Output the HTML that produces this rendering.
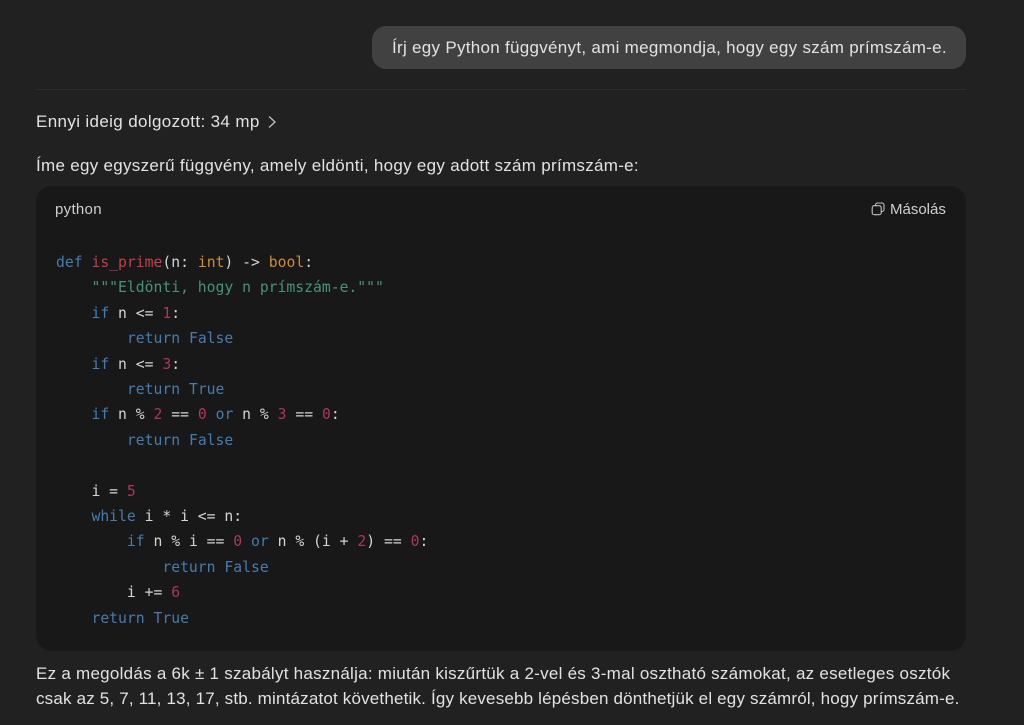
<!DOCTYPE html>
<html lang="hu">
<head>
<meta charset="utf-8">
<title>Python</title>
<style>
html,body{margin:0;padding:0;width:1024px;height:725px;overflow:hidden;background:#212121}
body{position:relative;font-family:"Liberation Sans",sans-serif;color:#e0e0e0}
.a{position:absolute;white-space:nowrap}
.t{font-size:17px;line-height:24px;color:#e2e2e2}
#bubble{left:372px;top:26px;width:594px;height:43px;background:#414141;border-radius:14px}
#hr{left:36px;top:89px;width:930px;height:1px;background:#2d2d2d}
#code{left:36px;top:186px;width:930px;height:465px;background:#181818;border-radius:16px}
.c{position:absolute;left:56px;margin:0;font-family:"DejaVu Sans Mono","Liberation Mono",monospace;font-size:14.72px;line-height:25.4px;color:#d4d4d4;white-space:pre}
.k{color:#457cad}.f{color:#c0414a}.y{color:#c98c3a}.s{color:#46927a}.n{color:#b0345b}
</style>
</head>
<body>
<div class="a" id="bubble"></div>
<div class="a t" style="left:392px;top:36px;letter-spacing:.29px">Írj egy Python függvényt, ami megmondja, hogy egy szám prímszám-e.</div>
<div class="a" id="hr"></div>
<div class="a t" style="left:36px;top:110px;letter-spacing:.36px">Ennyi ideig dolgozott: 34 mp</div>
<svg class="a" style="left:266px;top:114px" width="12" height="16" viewBox="0 0 12 16"><path d="M3 2.5l6 5.5-6 5.5" fill="none" stroke="#b8b8b8" stroke-width="1.4"/></svg>
<div class="a t" style="left:36px;top:154px;letter-spacing:.29px">Íme egy egyszerű függvény, amely eldönti, hogy egy adott szám prímszám-e:</div>
<div class="a" id="code"></div>
<div class="a" style="left:55px;top:201px;font-size:15px;line-height:18px;letter-spacing:.3px;color:#cfcfcf">python</div>
<svg class="a" style="left:871px;top:202px" width="14" height="14" viewBox="0 0 14 14"><path d="M4.5 3.5V3a2 2 0 0 1 2-2H11a2 2 0 0 1 2 2v4.5a2 2 0 0 1-2 2h-.5" fill="none" stroke="#c0c0c0" stroke-width="1.1"/><rect x="1.2" y="3.7" width="9" height="9" rx="2" fill="none" stroke="#c0c0c0" stroke-width="1.1"/></svg>
<div class="a" style="left:890px;top:201px;font-size:15px;line-height:18px;color:#cfcfcf">Másolás</div>
<pre class="c" style="top:250px"><span class="k">def</span> <span class="f">is_prime</span>(n: <span class="y">int</span>) -&gt; <span class="y">bool</span>:
    <span class="s">"""Eldönti, hogy n prímszám-e."""</span>
    <span class="k">if</span> n &lt;= <span class="n">1</span>:
        <span class="k">return</span> <span class="k">False</span>
    <span class="k">if</span> n &lt;= <span class="n">3</span>:
        <span class="k">return</span> <span class="k">True</span>
    <span class="k">if</span> n % <span class="n">2</span> == <span class="n">0</span> <span class="k">or</span> n % <span class="n">3</span> == <span class="n">0</span>:
        <span class="k">return</span> <span class="k">False</span>

    i = <span class="n">5</span>
    <span class="k">while</span> i * i &lt;= n:
        <span class="k">if</span> n % i == <span class="n">0</span> <span class="k">or</span> n % (i + <span class="n">2</span>) == <span class="n">0</span>:
            <span class="k">return</span> <span class="k">False</span>
        i += <span class="n">6</span>
    <span class="k">return</span> <span class="k">True</span></pre>
<div class="a t" style="left:36px;top:662px;letter-spacing:.26px">Ez a megoldás a 6k ± 1 szabályt használja: miután kiszűrtük a 2-vel és 3-mal osztható számokat, az esetleges osztók</div>
<div class="a t" style="left:36px;top:687px;letter-spacing:.18px">csak az 5, 7, 11, 13, 17, stb. mintázatot követhetik. Így kevesebb lépésben dönthetjük el egy számról, hogy prímszám-e.</div>
</body>
</html>
